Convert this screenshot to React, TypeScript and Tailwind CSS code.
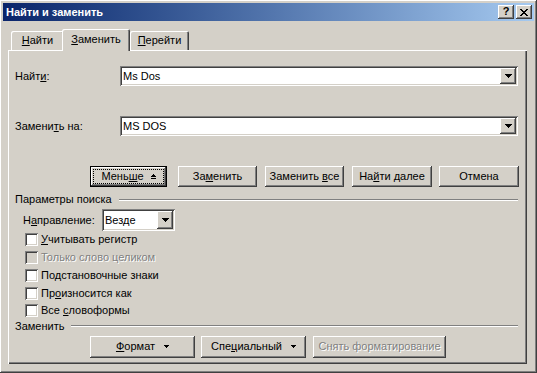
import React from "react";

const RAISED =
  "shadow-[inset_-1px_-1px_0_#404040,inset_1px_1px_0_#ffffff,inset_-2px_-2px_0_#808080,inset_2px_2px_0_#d4d0c8]";
const SUNKEN =
  "shadow-[inset_1px_1px_0_#808080,inset_-1px_-1px_0_#ffffff,inset_2px_2px_0_#404040,inset_-2px_-2px_0_#d4d0c8]";

function DownArrow() {
  return (
    <svg width="7" height="4" viewBox="0 0 7 4" shapeRendering="crispEdges">
      <path d="M0 0h7v1H0zM1 1h5v1H1zM2 2h3v1H2zM3 3h1v1H3z" fill="#000" />
    </svg>
  );
}

function SmallDown() {
  return (
    <svg width="5" height="3" viewBox="0 0 5 3" shapeRendering="crispEdges">
      <path d="M0 0h5v1H0zM1 1h3v1H1zM2 2h1v1H2z" fill="#000" />
    </svg>
  );
}

function UpBar() {
  return (
    <svg width="5" height="6" viewBox="0 0 5 6" shapeRendering="crispEdges">
      <path d="M2 0h1v1H2zM1 1h3v1H1zM0 2h5v1H0zM0 4h5v1H0z" fill="#000" />
    </svg>
  );
}

function CloseX() {
  return (
    <svg width="8" height="7" viewBox="0 0 8 7" shapeRendering="crispEdges">
      <path
        d="M0 0h2v1H0zM6 0h2v1H6zM1 1h2v1H1zM5 1h2v1H5zM2 2h4v1H2zM3 3h2v1H3zM2 4h4v1H2zM1 5h2v1H1zM5 5h2v1H5zM0 6h2v1H0zM6 6h2v1H6z"
        fill="#000"
      />
    </svg>
  );
}

function ComboButton() {
  return (
    <div className={`w-[16px] self-stretch bg-[#d4d0c8] flex items-center justify-center ${RAISED}`}>
      <DownArrow />
    </div>
  );
}

function Combo({ value, width }: { value: string; width: string }) {
  return (
    <div className={`${width} h-[20px] bg-white p-[2px] flex ${SUNKEN}`}>
      <div className="flex-1 flex items-center pl-[1px] leading-[13px]">{value}</div>
      <ComboButton />
    </div>
  );
}

function Button({
  children,
  className = "",
  disabled = false,
}: {
  children: React.ReactNode;
  className?: string;
  disabled?: boolean;
}) {
  return (
    <div
      className={`h-[21px] flex items-center justify-center bg-[#d4d0c8] leading-[13px] ${RAISED} ${
        disabled ? "text-[#808080] [text-shadow:1px_1px_0_#ffffff]" : ""
      } ${className}`}
    >
      {children}
    </div>
  );
}

function Check({ children, disabled = false }: { children: React.ReactNode; disabled?: boolean }) {
  return (
    <div className="h-[17.75px] flex items-center pl-[17px]">
      <div className={`w-[13px] h-[13px] ${disabled ? "bg-[#d4d0c8]" : "bg-white"} ${SUNKEN}`} />
      <span
        className={`ml-[3px] leading-[13px] ${
          disabled ? "text-[#808080] [text-shadow:1px_1px_0_#ffffff]" : ""
        }`}
      >
        {children}
      </span>
    </div>
  );
}

function Section({ label }: { label: string }) {
  return (
    <div className="h-[13px] flex items-center pl-[7px] pr-[9px]">
      <span className="leading-[13px]">{label}</span>
      <div className="flex-1 ml-[7px] h-[2px] border-t border-t-[#808080] border-b border-b-white" />
    </div>
  );
}

export default function App() {
  return (
    <div
      className={`w-[537px] h-[373px] bg-[#d4d0c8] p-[3px] flex flex-col text-[11px] text-black font-['Liberation_Sans',Arial,sans-serif] ${RAISED}`}
    >
      {/* Title bar */}
      <div className="h-[18px] flex items-center pl-[3px] pr-[2px] bg-gradient-to-r from-[#0a246a] to-[#a6caf0]">
        <span className="font-bold text-white text-[11px] leading-[13px]">Найти и заменить</span>
        <div className="ml-auto flex gap-[2px]">
          <div className={`w-[16px] h-[14px] bg-[#d4d0c8] flex items-center justify-center ${RAISED}`}>
            <span className="font-bold text-[11px] leading-[11px] -mt-[1px]">?</span>
          </div>
          <div className={`w-[16px] h-[14px] bg-[#d4d0c8] flex items-center justify-center ${RAISED}`}>
            <CloseX />
          </div>
        </div>
      </div>

      {/* Body */}
      <div className="flex flex-col pl-[5px] pt-[8px]">
        {/* Tabs */}
        <div className="flex items-end h-[21px] ml-[3px]">
          <div className="w-[53px] h-[19px] flex items-center justify-center pb-[1px] rounded-t-[2px] shadow-[inset_1px_1px_0_#ffffff,inset_-1px_0_0_#404040,inset_-2px_0_0_#808080]">
            <span>
              <u>Н</u>айти
            </span>
          </div>
          <div className="relative z-10 -ml-[2px] w-[68px] h-[22px] -mb-[1px] bg-[#d4d0c8] flex items-center justify-center pb-[2px] rounded-t-[2px] shadow-[inset_1px_1px_0_#ffffff,inset_-1px_0_0_#404040,inset_-2px_0_0_#808080]">
            <span>
              <u>З</u>аменить
            </span>
          </div>
          <div className="w-[59px] h-[19px] flex items-center justify-center pb-[1px] rounded-t-[2px] shadow-[inset_1px_1px_0_#ffffff,inset_-1px_0_0_#404040,inset_-2px_0_0_#808080]">
            <span>
              <u>П</u>ерейти
            </span>
          </div>
        </div>

        {/* Panel */}
        <div
          className={`w-[519px] h-[314px] flex flex-col shadow-[inset_1px_1px_0_#ffffff,inset_-1px_-1px_0_#404040,inset_-2px_-2px_0_#808080]`}
        >
          <div className="flex items-center pt-[16px] pl-[7px]">
            <span className="w-[105px]">
              Найт<u>и</u>:
            </span>
            <Combo value="Ms Dos" width="w-[398px]" />
          </div>
          <div className="flex items-center mt-[30px] pl-[7px]">
            <span className="w-[105px]">
              Замени<u>т</u>ь на:
            </span>
            <Combo value="MS DOS" width="w-[398px]" />
          </div>

          {/* Buttons */}
          <div className="flex mt-[30px] pl-[82px]">
            <div className="w-[77px] h-[21px] border border-black bg-[#d4d0c8] flex">
              <div className={`flex-1 p-[2px] flex ${RAISED}`}>
                <div className="flex-1 border border-dotted border-black flex items-center justify-center gap-[7px]">
                  <span className="leading-[13px]">
                    Мень<u>ш</u>е
                  </span>
                  <UpBar />
                </div>
              </div>
            </div>
            <Button className="ml-[11px] w-[79px]">
              <span>
                За<u>м</u>енить
              </span>
            </Button>
            <Button className="ml-[8px] w-[79px]">
              <span>
                Заменить <u>в</u>се
              </span>
            </Button>
            <Button className="ml-[8px] w-[80px]">
              <span>
                На<u>й</u>ти далее
              </span>
            </Button>
            <Button className="ml-[7px] w-[80px]">
              <span>Отмена</span>
            </Button>
          </div>

          <div className="mt-[6px]">
            <Section label="Параметры поиска" />
          </div>

          <div className="flex items-center mt-[3px] pl-[15px]">
            <span className="w-[79px]">
              Н<u>а</u>правление:
            </span>
            <div className={`w-[73px] h-[22px] bg-white p-[2px] flex ${SUNKEN}`}>
              <div className="flex-1 flex items-center pl-[1px]">Везде</div>
              <ComboButton />
            </div>
          </div>

          <div className="flex flex-col">
            <Check>
              <u>У</u>читывать регистр
            </Check>
            <Check disabled>Только слово целиком</Check>
            <Check>
              По<u>д</u>становочные знаки
            </Check>
            <Check>
              Пр<u>о</u>износится как
            </Check>
            <Check>
              Все <u>с</u>ловоформы
            </Check>
          </div>

          <Section label="Заменить" />

          <div className="flex mt-[3px] pl-[82px]">
            <Button className="w-[105px] h-[22px] gap-[9px]">
              <span>
                <u>Ф</u>ормат
              </span>
              <SmallDown />
            </Button>
            <Button className="ml-[6px] w-[105px] h-[22px] gap-[9px]">
              <span>
                Спе<u>ц</u>иальный
              </span>
              <SmallDown />
            </Button>
            <Button disabled className="ml-[7px] w-[133px] h-[22px]">
              <span>Снять форматирование</span>
            </Button>
          </div>
        </div>
      </div>
    </div>
  );
}
